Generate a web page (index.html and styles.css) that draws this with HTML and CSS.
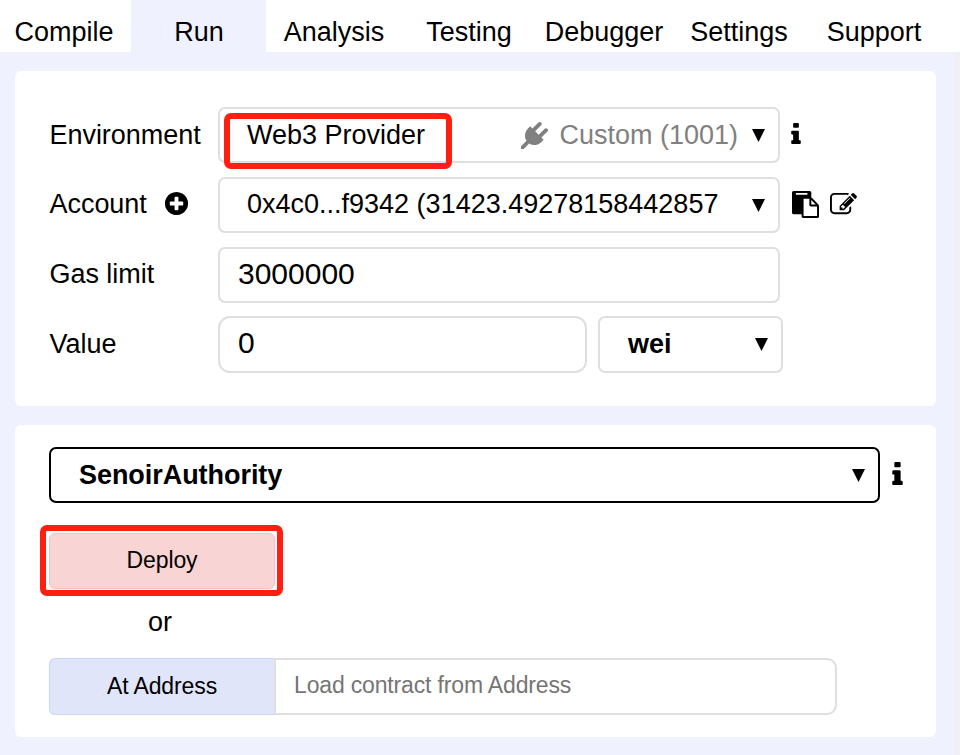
FILE: index.html
```html
<!DOCTYPE html>
<html lang="en">
<head>
<meta charset="utf-8">
<title>Run</title>
<link rel="stylesheet" href="styles.css">
</head>
<body>
<svg class="sprite" aria-hidden="true">
  <symbol id="info" viewBox="576 128 640 1408"><path d="M1216 1344v128q0 26-19 45t-45 19h-512q-26 0-45-19t-19-45v-128q0-26 19-45t45-19h64v-384h-64q-26 0-45-19t-19-45v-128q0-26 19-45t45-19h384q26 0 45 19t19 45v576h64q26 0 45 19t19 45zm-128-1152v192q0 26-19 45t-45 19h-256q-26 0-45-19t-19-45v-192q0-26 19-45t45-19h256q26 0 45 19t19 45z"/></symbol>
  <symbol id="caret" viewBox="0 0 13 13"><path d="M0 0h13L6.5 13z"/></symbol>
</svg>
<nav class="tabs">
  <div class="tab">Compile</div>
  <div class="tab active">Run</div>
  <div class="tab">Analysis</div>
  <div class="tab">Testing</div>
  <div class="tab">Debugger</div>
  <div class="tab">Settings</div>
  <div class="tab">Support</div>
</nav>
<div class="body">
  <main class="panel">
    <section class="card settings">
      <div class="row">
        <div class="label">Environment</div>
        <div class="field select env">
          <span class="marked">Web3 Provider</span>
          <span class="network">
            <svg class="icon" viewBox="0 0 1792 1792"><path d="M1755 453q37 38 37 90.5t-37 90.5l-401 400 150 150-160 160q-163 163-389.5 186.5t-411.5-100.5l-362 362h-181v-181l362-362q-124-185-100.5-411.5t186.5-389.5l160-160 150 150 400-401q38-37 91-37t90 37 37 90.5-37 90.5l-400 401 234 234 401-400q38-37 91-37t90 37z"/></svg>
            <span>Custom (1001)</span>
          </span>
          <svg class="caret"><use href="#caret"/></svg>
        </div>
        <svg class="info"><use href="#info"/></svg>
      </div>
      <div class="row">
        <div class="label raised">Account
          <svg class="icon plus" viewBox="0 0 1792 1792"><path d="M1344 960v-128q0-26-19-45t-45-19h-256v-256q0-26-19-45t-45-19h-128q-26 0-45 19t-19 45v256h-256q-26 0-45 19t-19 45v128q0 26 19 45t45 19h256v256q0 26 19 45t45 19h128q26 0 45-19t19-45v-256h256q26 0 45-19t19-45zm320-64q0 209-103 385.5t-279.5 279.5-385.5 103-385.5-103-279.5-279.5-103-385.5 103-385.5 279.5-279.5 385.5-103 385.5 103 279.5 279.5 103 385.5z"/></svg>
        </div>
        <div class="field select account"><span>0x4c0...f9342 (31423.49278158442857</span><svg class="caret"><use href="#caret"/></svg></div>
        <div class="actions">
          <svg class="icon" viewBox="0 0 1792 1792"><path d="M768 1664h896v-640h-416q-40 0-68-28t-28-68v-416h-384v1152zm256-1440v-64q0-13-9.5-22.5t-22.5-9.5h-704q-13 0-22.5 9.5t-9.5 22.5v64q0 13 9.5 22.5t22.5 9.5h704q13 0 22.5-9.5t9.5-22.5zm256 672h299l-299-299v299zm512 128v672q0 40-28 68t-68 28h-960q-40 0-68-28t-28-68v-160h-544q-40 0-68-28t-28-68v-1344q0-40 28-68t68-28h1088q40 0 68 28t28 68v328q21 13 36 28l408 408q28 28 48 76t20 88z"/></svg>
          <svg class="icon" viewBox="0 0 1792 1792"><path d="M888 1184l116-116-152-152-116 116v56h96v96h56zm440-720q-16-16-33 1l-350 350q-17 17-1 33t33-1l350-350q17-17 1-33zm80 594v190q0 119-84.5 203.5t-203.5 84.5h-832q-119 0-203.5-84.5t-84.5-203.5v-832q0-119 84.5-203.5t203.5-84.5h832q63 0 117 25 15 7 18 23 3 17-9 29l-49 49q-14 14-32 8-23-6-45-6h-832q-66 0-113 47t-47 113v832q0 66 47 113t113 47h832q66 0 113-47t47-113v-126q0-13 9-22l64-64q15-15 35-7t20 29zm-96-738l288 288-672 672h-288v-288zm444 132l-92 92-288-288 92-92q28-28 68-28t68 28l152 152q28 28 28 68t-28 68z"/></svg>
        </div>
      </div>
      <div class="row">
        <div class="label raised">Gas limit</div>
        <div class="field input">3000000</div>
      </div>
      <div class="row value-row">
        <div class="label raised">Value</div>
        <div class="field input amount">0</div>
        <div class="field select unit"><span>wei</span><svg class="caret"><use href="#caret"/></svg></div>
      </div>
    </section>
    <section class="card contract">
      <div class="contract-row">
        <div class="field select contract-name"><span>SenoirAuthority</span><svg class="caret"><use href="#caret"/></svg></div>
        <svg class="info"><use href="#info"/></svg>
      </div>
      <div class="button deploy">Deploy</div>
      <div class="or">or</div>
      <div class="address-row">
        <div class="button at">At Address</div>
        <div class="field address">Load contract from Address</div>
      </div>
    </section>
  </main>
  <div class="scrollbar"></div>
</div>
</body>
</html>
```
FILE: styles.css
```css
*, *::after { box-sizing: border-box; }
body {
  margin: 0;
  height: 755px;
  overflow: hidden;
  display: flex;
  flex-direction: column;
  background: #fff;
  color: #000;
  font: 27px/30px "Liberation Sans", Arial, sans-serif;
}
svg { display: block; flex: none; }
.sprite { position: absolute; width: 0; height: 0; }

.tabs { display: flex; height: 52px; margin-left: -4px; flex: none; }
.tab { width: 135px; flex: none; padding: 17px 0 0 1px; text-align: center; }
.active { background: #eff1ff; }

.body { display: flex; flex: 1; }
.panel {
  flex: 1;
  display: flex;
  flex-direction: column;
  gap: 19px;
  padding: 19px 19px 0 15px;
  background: #eff1ff;
}
.scrollbar { width: 5px; background: #f0f0f0; }
.card { background: #fff; border-radius: 6px; }

.settings {
  height: 335px;
  padding: 36px 0 0 34px;
  display: flex;
  flex-direction: column;
  gap: 14px;
}
.row { display: flex; align-items: center; height: 56px; }
.label { width: 169px; padding-left: 0.5px; letter-spacing: -0.04px; display: flex; align-items: center; }
.raised { padding-bottom: 3px; }
.icon { width: 27px; height: 27px; }
.plus { margin-left: 16px; }
.field {
  width: 562px;
  height: 56px;
  border: 2px solid #dfdfdf;
  border-radius: 7px;
  display: flex;
  align-items: center;
  white-space: nowrap;
}
.select { justify-content: space-between; padding: 0 13px 0 27px; }
.caret { width: 13px; height: 13px; }
.info { width: 10px; height: 21px; margin-left: 11px; margin-bottom: 3px; }
.marked { position: relative; }
.marked::after {
  content: "";
  position: absolute;
  left: -23px;
  top: -7px;
  width: 228px;
  height: 56px;
  border: 6px solid #ff1e10;
  border-radius: 7px;
}
.network { display: flex; align-items: center; gap: 11px; margin-left: auto; margin-right: 14px; color: #808080; fill: #808080; }
.account span { margin-top: -3px; }
.actions { display: flex; gap: 11px; margin-left: 12px; margin-bottom: 2px; }
.input { font-size: 30px; padding-left: 18px; padding-bottom: 2px; }
.value-row { height: 57px; margin-top: -1px; }
.value-row .raised { padding-bottom: 2px; }
.value-row .field { height: 57px; }
.value-row .amount { width: 369px; border-radius: 12px; padding-bottom: 3px; }
.value-row .unit { width: 185px; margin-left: 11px; padding-left: 28px; font-weight: bold; }
.unit span { margin-top: -2px; }

.contract { height: 312px; padding: 22px 0 0 34px; }
.contract-row { display: flex; align-items: center; }
.contract-row .info { width: 11px; height: 23px; margin-left: 12px; margin-bottom: 4px; }
.contract-name { width: 831px; border-color: #000; font-weight: bold; padding-left: 28px; letter-spacing: -0.05px; }
.contract-name span { margin-top: -1px; }
.button {
  display: flex;
  align-items: center;
  justify-content: center;
  font-size: 23px;
  letter-spacing: -0.12px;
  border: 1px solid #ccd5fb;
  background: #e0e5fa;
  border-radius: 6px;
}
.deploy {
  position: relative;
  width: 226px;
  height: 56px;
  margin-top: 30px;
  padding-bottom: 2px;
  background: #f9d4d5;
  border-color: #f5bfc3;
}
.deploy::after {
  content: "";
  position: absolute;
  left: -10.5px;
  top: -9px;
  width: 243px;
  height: 71px;
  border: 6px solid #ff1e10;
  border-radius: 7px;
}
.or { width: 222px; margin-top: 18px; text-align: center; }
.address-row { display: flex; margin-top: 21px; }
.at { width: 225px; height: 57px; padding-bottom: 1px; border-right: 0; border-radius: 6px 0 0 6px; }
.address { width: 563px; height: 57px; padding: 0 0 3px 18px; font-size: 23px; letter-spacing: -0.16px; color: #757575; border-radius: 0 10px 10px 0; }
```
